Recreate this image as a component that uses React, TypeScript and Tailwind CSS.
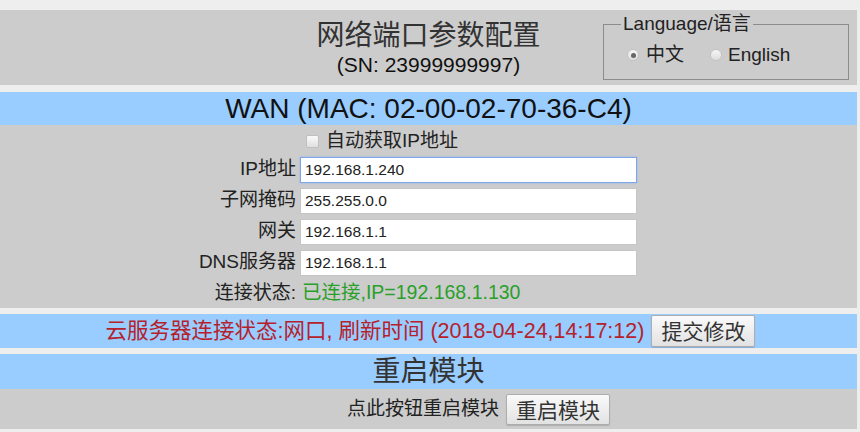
import { useState } from "react";

const font = {
  fontFamily: '"Liberation Sans", "Noto Sans CJK SC", Arial, sans-serif',
};

function Radio({ checked }: { checked?: boolean }) {
  return (
    <span className="flex h-[12px] w-[12px] items-center justify-center rounded-full border border-[#c4c4c4] bg-gradient-to-b from-[#f6f6f6] to-[#dedede]">
      {checked && <span className="h-[5px] w-[5px] rounded-full bg-[#666]" />}
    </span>
  );
}

function Campo({ label, valor, foco }: { label: string; valor: string; foco?: boolean }) {
  return (
    <div className="flex h-[31px] items-center">
      <span className="w-[296px] text-right text-[19px] text-[#222]">{label}</span>
      <input
        readOnly
        value={valor}
        className={
          foco
            ? "ml-[4px] h-[26px] w-[337px] border border-[#7ea6e6] bg-white px-[4px] text-[15.5px] text-[#222] shadow-[0_0_2px_#8fb4ee] outline-none"
            : "ml-[4px] h-[26px] w-[337px] border border-[#c6c6c6] bg-white px-[4px] text-[15.5px] text-[#222] outline-none"
        }
        style={font}
      />
    </div>
  );
}

export default function App() {
  const [lingua] = useState("zh");

  return (
    <main className="min-h-screen bg-[#eeeeee] pt-[10px] text-[#222]" style={font}>
      <div className="w-[857px]">
        {/* cabeçalho */}
        <header className="grid h-[75px] grid-cols-[1fr_auto_1fr] bg-[#cccccc]">
          <div />
          <div className="flex flex-col items-center pt-[10px]">
            <h1 className="text-[28px] leading-[32px] text-[#333]">网络端口参数配置</h1>
            <p className="mt-[1px] text-[21px] leading-[24px] text-[#111]">(SN: 23999999997)</p>
          </div>
          <div className="flex items-start justify-end pr-[8px]">
            <fieldset className="mt-[3px] w-[246px] border border-[#8c8c8c] pb-[12px] pl-[17px] pr-2">
              <legend className="px-[2px] text-[19px] leading-[22px] text-[#222]">Language/语言</legend>
              <div className="mt-[8px] flex h-[24px] items-center text-[19px]">
                <span className="ml-[6px]">
                  <Radio checked={lingua === "zh"} />
                </span>
                <span className="ml-[7px]">中文</span>
                <span className="ml-[26px]">
                  <Radio checked={lingua === "en"} />
                </span>
                <span className="ml-[6px]">English</span>
              </div>
            </fieldset>
          </div>
        </header>

        <div className="mt-[7px] flex h-[33px] items-center justify-center bg-[#99ccff] text-[28px] text-[#111]">
          WAN (MAC: 02-00-02-70-36-C4)
        </div>

        <section className="h-[183px] bg-[#cccccc] pt-[3px]">
          <div className="flex h-[26px] items-center pl-[306px]">
            <span className="h-[13px] w-[13px] rounded-[2px] border border-[#c0c0c0] bg-gradient-to-b from-[#fafafa] to-[#e0e0e0]" />
            <span className="ml-[7px] text-[19px]">自动获取IP地址</span>
          </div>
          <Campo label="IP地址" valor="192.168.1.240" foco />
          <Campo label="子网掩码" valor="255.255.0.0" />
          <Campo label="网关" valor="192.168.1.1" />
          <Campo label="DNS服务器" valor="192.168.1.1" />
          <div className="flex h-[30px] items-center">
            <span className="w-[296px] text-right text-[19px]">连接状态:</span>
            <span className="ml-[6px] text-[19.5px] text-[#2a9f2a]">已连接,IP=192.168.1.130</span>
          </div>
        </section>

        <div className="mt-[6px] flex h-[34px] items-center justify-center gap-[7px] bg-[#99ccff] pl-[4px]">
          <span className="text-[21.5px] text-[#b5222b]">云服务器连接状态:网口, 刷新时间 (2018-04-24,14:17:12)</span>
          <button className="h-[32px] w-[104px] rounded-[2px] border border-[#adadad] bg-gradient-to-b from-[#fafafa] to-[#e2e2e2] text-[21px] text-[#333] shadow-[0_1px_1px_rgba(0,0,0,0.15)]">
            提交修改
          </button>
        </div>

        <div className="mt-[6px] flex h-[35px] items-center justify-center bg-[#99ccff] text-[28px] text-[#333]">
          重启模块
        </div>
        <div className="flex h-[40px] items-center justify-center gap-[7px] bg-[#cccccc] pl-[100px]">
          <span className="text-[19px]">点此按钮重启模块</span>
          <button className="h-[31px] w-[104px] rounded-[2px] border border-[#adadad] bg-gradient-to-b from-[#fafafa] to-[#e2e2e2] text-[21px] text-[#333] shadow-[0_1px_1px_rgba(0,0,0,0.15)]">
            重启模块
          </button>
        </div>
      </div>
    </main>
  );
}
